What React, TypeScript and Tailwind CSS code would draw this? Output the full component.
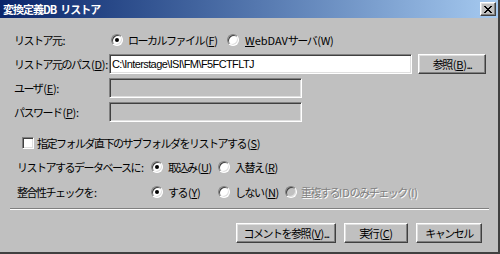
import React from "react";

// mnemonic "(X)" with underlined letter, normal spacing
function M({ c, plain }: { c: string; plain?: boolean }) {
  return (
    <span className="tracking-[-0.3px] ml-[1px]">
      ({plain ? c : <span className="underline underline-offset-[1px]">{c}</span>})
    </span>
  );
}

const Colon = () => <span className="tracking-[0px] ml-[1px]">:</span>;

function Radio({ checked, disabled }: { checked?: boolean; disabled?: boolean }) {
  return (
    <span
      className={
        "inline-flex w-[12px] h-[12px] shrink-0 items-center justify-center rounded-full border border-t-[#808080] border-l-[#808080] border-b-white border-r-white shadow-[inset_1px_1px_0_#404040,inset_-1px_-1px_0_#dfdfdf] " +
        (disabled ? "bg-[#c0c0c0]" : "bg-white")
      }
    >
      {checked && <span className="w-[4px] h-[4px] rounded-full bg-black" />}
    </span>
  );
}

function Btn({ w, children }: { w: string; children: React.ReactNode }) {
  return (
    <button
      className={
        "h-[20px] shrink-0 flex items-center justify-center bg-[#c0c0c0] border border-t-white border-l-white border-b-[#404040] border-r-[#404040] shadow-[inset_-1px_-1px_0_#808080,inset_1px_1px_0_#dfdfdf] " +
        w
      }
    >
      {children}
    </button>
  );
}

const sunken =
  "h-[20px] shrink-0 border border-t-[#808080] border-l-[#808080] border-b-white border-r-white shadow-[inset_1px_1px_0_#404040,inset_-1px_-1px_0_#dfdfdf]";

export default function App() {
  return (
    <div className="w-[500px] h-[254px] flex flex-col bg-[#c0c0c0] border-r-2 border-b-2 border-[#404040] text-black text-[11px] leading-[14px] tracking-[-1.5px] whitespace-nowrap font-['Noto_Sans_CJK_JP',sans-serif] overflow-hidden">
      {/* title bar */}
      <div className="h-[18px] shrink-0 flex items-center bg-linear-to-r from-[#0a246a] to-[#a6caf0] pl-[3px] pr-[2px]">
        <span className="text-white font-bold tracking-[-1px]">変換定義DB</span>
        <span className="text-white font-bold tracking-[-1px] ml-[4px]">リストア</span>
        <button className="ml-auto w-[16px] h-[14px] flex items-center justify-center bg-[#c0c0c0] border border-t-white border-l-white border-b-[#404040] border-r-[#404040] shadow-[inset_-1px_-1px_0_#808080,inset_1px_1px_0_#dfdfdf]">
          <svg width="8" height="7" viewBox="0 0 8 7" shapeRendering="crispEdges">
            <path d="M0 0h2v1H0zM6 0h2v1H6zM1 1h2v1H1zM5 1h2v1H5zM2 2h4v1H2zM3 3h2v1H3zM2 4h4v1H2zM1 5h2v1H1zM5 5h2v1H5zM0 6h2v1H0zM6 6h2v1H6z" fill="#000" />
          </svg>
        </button>
      </div>

      {/* restore source */}
      <div className="flex items-center h-[16px] mt-[14px] pl-[14px]">
        <span className="w-[97px] shrink-0">
          リストア元<Colon />
        </span>
        <label className="flex items-center gap-[5px] w-[116px] shrink-0">
          <Radio checked />
          <span>
            ローカルファイル<M c="F" />
          </span>
        </label>
        <label className="flex items-center gap-[6px]">
          <Radio />
          <span>
            <span className="tracking-[0px]">
              <span className="underline underline-offset-[1px]">W</span>ebDAV
            </span>
            サーバ<M c="W" plain />
          </span>
        </label>
      </div>

      {/* path */}
      <div className="flex items-center mt-[6px] pl-[14px]">
        <span className="w-[95px] shrink-0">
          リストア元のパス<M c="D" />:
        </span>
        <div className={"w-[303px] bg-white flex items-center px-[2px] " + sunken}>
          <span className="font-['Liberation_Sans',sans-serif] text-[11px] tracking-[-0.6px]">
            C:\Interstage\ISI\FM\F5FCTFLTJ
          </span>
        </div>
        <div className="ml-[6px]">
          <Btn w="w-[68px]">
            参照<M c="B" />...
          </Btn>
        </div>
      </div>

      {/* user */}
      <div className="flex items-center mt-[4px] pl-[14px]">
        <span className="w-[95px] shrink-0">
          ユーザ<M c="E" />:
        </span>
        <div className={"w-[193px] bg-[#c0c0c0] " + sunken} />
      </div>

      {/* password */}
      <div className="flex items-center mt-[4px] pl-[14px]">
        <span className="w-[95px] shrink-0">
          パスワード<M c="P" />:
        </span>
        <div className={"w-[193px] bg-[#c0c0c0] " + sunken} />
      </div>

      {/* subfolder checkbox */}
      <label className="flex items-center h-[13px] mt-[14px] pl-[22px] gap-[3px]">
        <span className="w-[12px] h-[12px] shrink-0 bg-white border border-t-[#808080] border-l-[#808080] border-b-white border-r-white shadow-[inset_1px_1px_0_#404040,inset_-1px_-1px_0_#dfdfdf]" />
        <span>
          指定フォルダ直下のサブフォルダをリストアする<M c="S" />
        </span>
      </label>

      {/* database */}
      <div className="flex items-center h-[14px] mt-[11px] pl-[17px]">
        <span className="w-[134px] shrink-0">
          リストアするデータベースに<Colon />
        </span>
        <label className="flex items-center gap-[5px] w-[67px] shrink-0">
          <Radio checked />
          <span>
            取込み<M c="U" />
          </span>
        </label>
        <label className="flex items-center gap-[5px]">
          <Radio />
          <span>
            入替え<M c="R" />
          </span>
        </label>
      </div>

      {/* consistency */}
      <div className="flex items-center h-[14px] mt-[11px] pl-[17px]">
        <span className="w-[134px] shrink-0">
          整合性チェックを<Colon />
        </span>
        <label className="flex items-center gap-[5px] w-[67px] shrink-0">
          <Radio checked />
          <span>
            する<M c="Y" />
          </span>
        </label>
        <label className="flex items-center gap-[5px] w-[67px] shrink-0">
          <Radio />
          <span>
            しない<M c="N" />
          </span>
        </label>
        <label className="flex items-center gap-[4px]">
          <Radio disabled />
          <span className="text-[#808080] [text-shadow:1px_1px_0_#ffffff]">
            重複する<span className="tracking-[0px]">ID</span>のみチェック<M c="I" plain />
          </span>
        </label>
      </div>

      {/* separator */}
      <div className="mt-[9px] ml-[10px] w-[479px] border-t border-t-[#808080] border-b border-b-white" />

      {/* buttons */}
      <div className="flex justify-end gap-[8px] mt-[13px] pr-[16px]">
        <Btn w="w-[100px]">
          コメントを参照<M c="V" />...
        </Btn>
        <Btn w="w-[64px]">
          実行<M c="C" />
        </Btn>
        <Btn w="w-[66px]">キャンセル</Btn>
      </div>
    </div>
  );
}
